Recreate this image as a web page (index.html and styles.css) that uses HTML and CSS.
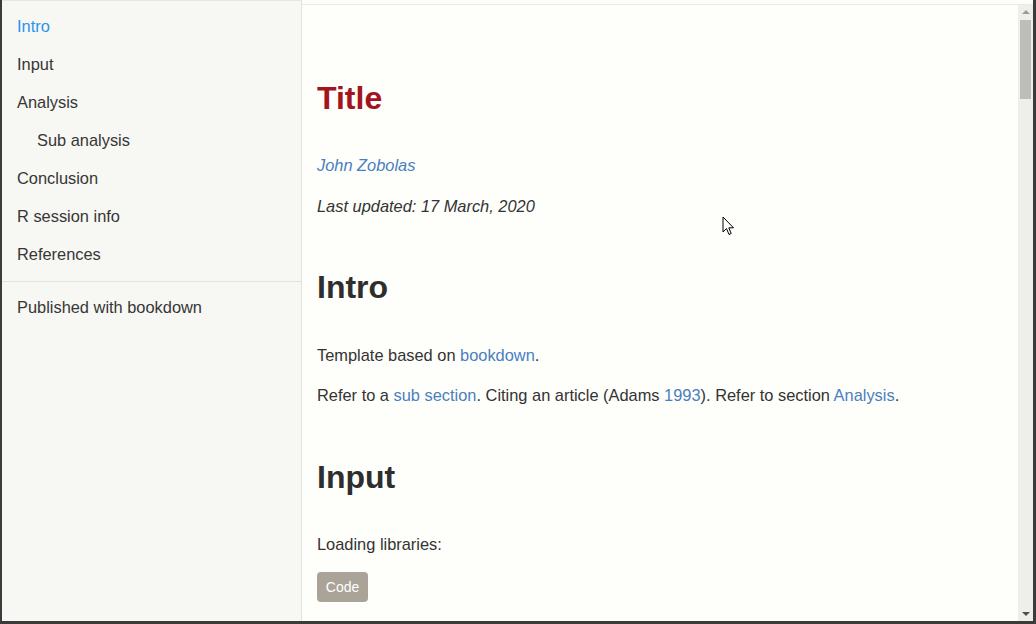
FILE: index.html
```html
<!DOCTYPE html>
<html>
<head>
<meta charset="utf-8">
<title>Title</title>
<link rel="stylesheet" href="styles.css">
</head>
<body>
<div class="window">
  <nav class="sidebar">
    <ul class="toc toc-main">
      <li class="active">Intro</li>
      <li>Input</li>
      <li>Analysis</li>
      <li class="sub">Sub analysis</li>
      <li>Conclusion</li>
      <li>R session info</li>
      <li>References</li>
    </ul>
    <div class="divider"></div>
    <ul class="toc">
      <li>Published with bookdown</li>
    </ul>
  </nav>
  <main class="main">
    <div class="content">
      <h1 class="title">Title</h1>
      <p class="author"><a>John Zobolas</a></p>
      <p class="date">Last updated: 17 March, 2020</p>
      <h1 class="h-intro">Intro</h1>
      <p class="p1">Template based on <a>bookdown</a>.</p>
      <p class="p2">Refer to a <a>sub section</a>. Citing an article (Adams <a>1993</a>). Refer to section <a>Analysis</a>.</p>
      <h1 class="h-input">Input</h1>
      <p class="p3">Loading libraries:</p>
      <button class="code-btn">Code</button>
    </div>
    <div class="scrollbar">
      <div class="arrow up"></div>
      <div class="thumb"></div>
      <div class="track-rest"></div>
      <div class="arrow down"></div>
    </div>
  </main>
  <svg class="cursor" width="13" height="21" viewBox="0 0 13 21">
    <path d="M1 1 L1 16 L4.5 12.5 L7 18.5 L9.2 17.5 L6.8 11.8 L11.5 11.8 Z" fill="#fff" stroke="#000" stroke-width="1" stroke-linejoin="miter"/>
  </svg>
</div>
</body>
</html>
```
FILE: styles.css
```css
html, body {
  margin: 0;
  padding: 0;
}
body {
  font-family: "Liberation Sans", Arial, sans-serif;
  color: #333;
  background: #fff;
}
.window {
  position: relative;
  width: 1036px;
  height: 624px;
  box-sizing: border-box;
  border-left: 2px solid #3b3b3b;
  border-right: 3px solid #3b3b3b;
  border-bottom: 3px solid #3b3b3b;
  display: flex;
  overflow: hidden;
  background: #fdfdfb;
}
.sidebar {
  width: 300px;
  flex: none;
  box-sizing: border-box;
  background: #f7f7f4;
  border-right: 1px solid #e2e2de;
  border-top: 1px solid #e6e6e2;
}
.toc {
  list-style: none;
  margin: 0;
  padding: 6px 0 0 0;
}
.toc li {
  font-size: 16.4px;
  line-height: 20px;
  padding: 9px 15px;
  color: #363636;
}
.toc li.active {
  color: #2a94ea;
}
.toc li.sub {
  padding-left: 35px;
}
.divider {
  height: 1px;
  background: #e2e2de;
  margin-top: 8px;
}
.main {
  flex: 1;
  display: flex;
  margin-top: 4px;
  border-top: 1px solid #ebebe6;
  background: #fefefb;
  min-width: 0;
}
.content {
  flex: 1;
  padding: 0 15px;
}
.content h1 {
  font-size: 32px;
  line-height: 40px;
  font-weight: bold;
  margin: 0;
  color: #2e2e2e;
}
.content p {
  font-size: 16.4px;
  line-height: 22px;
  margin: 0;
  color: #333;
}
.content a {
  color: #4a7fbf;
}
h1.title {
  color: #a3151c;
  margin-top: 73px;
}
.content .author {
  font-style: italic;
  margin-top: 36px;
}
.content .date {
  font-style: italic;
  margin-top: 19px;
}
.content h1.h-intro {
  margin-top: 50px;
}
.content .p1 {
  margin-top: 37px;
}
.content .p2 {
  margin-top: 18px;
}
.content h1.h-input {
  margin-top: 51px;
}
.content .p3 {
  margin-top: 36px;
}
.code-btn {
  display: block;
  margin-top: 17px;
  width: 51px;
  height: 30px;
  border: none;
  border-radius: 4px;
  background: #aaa398;
  color: #fff;
  font-family: "Liberation Sans", Arial, sans-serif;
  font-size: 14px;
  padding: 0;
}
.scrollbar {
  width: 15px;
  flex: none;
  background: #eeeeeb;
  display: flex;
  flex-direction: column;
  align-items: center;
}
.arrow {
  width: 0;
  height: 0;
  border-left: 4px solid transparent;
  border-right: 4px solid transparent;
}
.arrow.up {
  border-bottom: 4px solid #9c9c98;
  margin-top: 5px;
}
.arrow.down {
  border-top: 4px solid #505050;
  margin-bottom: 5px;
}
.thumb {
  width: 11px;
  height: 79px;
  margin-top: 6px;
  background: #bdbdb9;
}
.track-rest {
  flex: 1;
}
.cursor {
  position: absolute;
  left: 720px;
  top: 216px;
}
```
